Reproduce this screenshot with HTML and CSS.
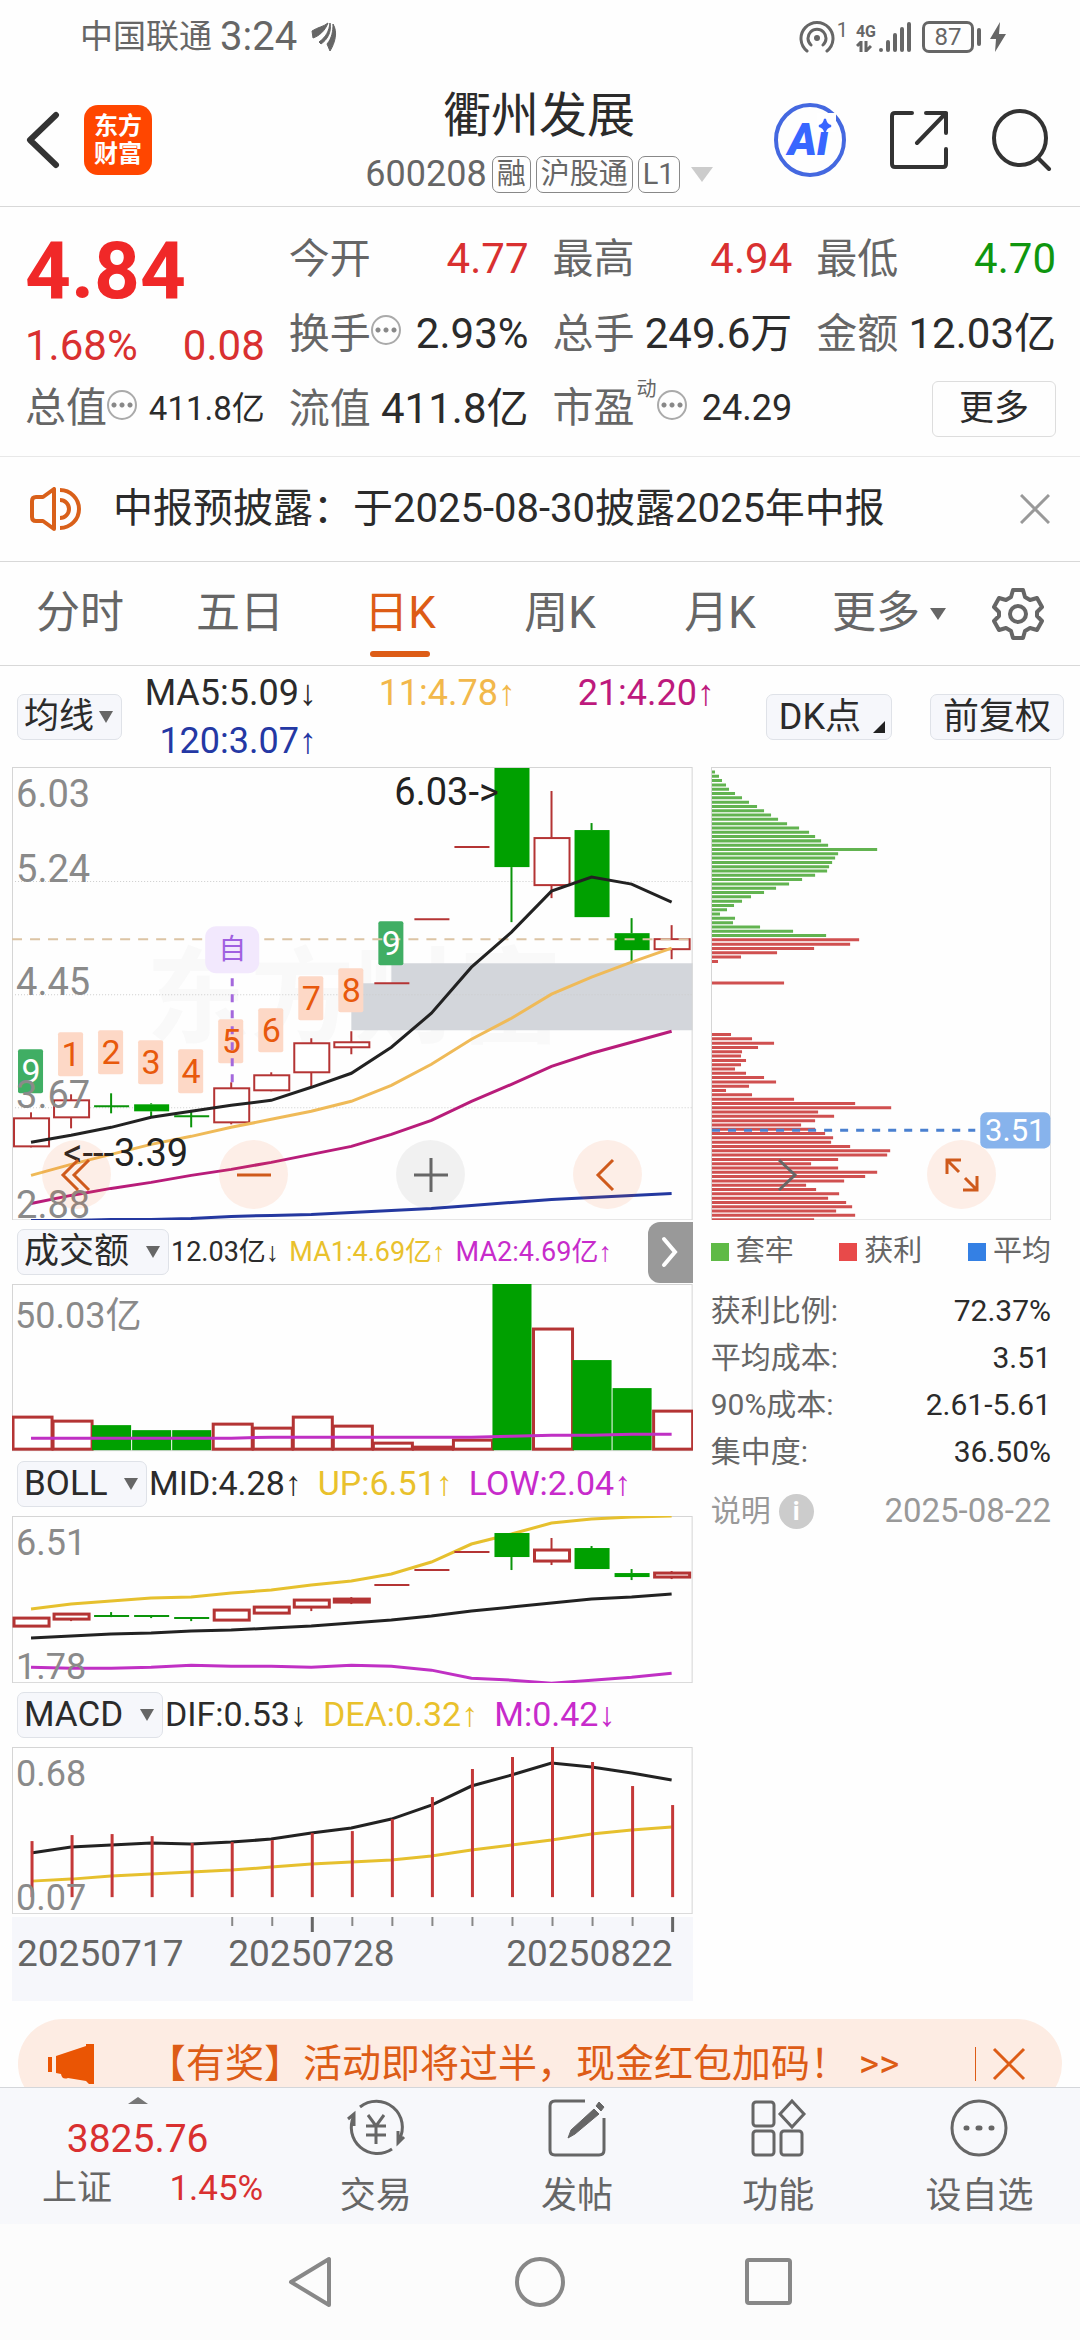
FILE: index.html
```html
<!DOCTYPE html>
<html lang="zh-CN">
<head>
  <meta charset="UTF-8">
  <meta name="viewport" content="width=device-width, initial-scale=1">
  <title>衢州发展 600208</title>
  <link rel="stylesheet" href="styles.css">
</head>
<body>
  <div class="status-bar">
    <span class="carrier">中国联通</span>
    <span class="clock">3:24</span>
    <svg class="status-leaf" width="26" height="30" viewBox="0 0 26 30">
      <path d="M1 9C7 5 12 5 17 1C14 9 8 14 2 16ZM8 20C15 15 18 9 19 1C21 10 16 18 10 22ZM22 2C27 10 24 21 19 29L16 22C21 16 22 9 22 2Z" fill="#666" stroke="#666"/>
    </svg>
    <div class="status-right">
      <svg width="36" height="34" viewBox="0 0 36 34" fill="none" stroke="#666" stroke-width="3" stroke-linecap="round">
        <path d="M8 31A16 16 0 1 1 28 31M12 25A9 9 0 1 1 24 25"/>
        <circle cx="18" cy="18" r="3" fill="#666" stroke="none"/>
      </svg>
      <span class="status-one">1</span>
      <span class="status-net">4G<svg width="16" height="11" viewBox="0 0 16 11" fill="none" stroke="#666" stroke-width="3"><path d="M1 5L5 1V11M10 0V10L15 5"/></svg></span>
      <svg width="34" height="32" viewBox="0 0 34 32" stroke="#666" stroke-width="4" stroke-linecap="round">
        <path d="M3 29V29M10 21V29M17 14V29M24 8V29M31 3V29"/>
      </svg>
      <span class="battery">87</span>
      <svg width="16" height="32" viewBox="0 0 16 32"><path d="M10 1L0 18H6L5 31L16 13H9Z" fill="#666"/></svg>
    </div>
  </div>

  <header class="title-bar">
    <div class="title-left">
      <button class="icon-btn" aria-label="返回">
        <svg width="34" height="58" viewBox="0 0 34 58" fill="none" stroke="#333" stroke-width="6" stroke-linecap="round" stroke-linejoin="round"><path d="M30 4L4 29L30 54"/></svg>
      </button>
      <span class="app-logo">东方<br>财富</span>
    </div>
    <div class="title-center">
      <h1>衢州发展</h1>
      <div class="stock-code">
        <span>600208</span>
        <span class="tag">融</span>
        <span class="tag">沪股通</span>
        <span class="tag">L1</span>
        <span class="caret"></span>
      </div>
    </div>
    <div class="title-right">
      <button class="icon-btn" aria-label="AI">
        <svg width="72" height="74" viewBox="0 0 72 74">
          <ellipse cx="36" cy="37" rx="34" ry="35" fill="none" stroke="#4468e0" stroke-width="4"/>
          <text x="14" y="52" class="ai-text">Ai</text>
          <path d="M43 10H62V29H43Z" fill="#fff"/>
          <path d="M51 16Q52 22 57 23Q52 24 51 29Q50 24 45 23Q50 22 51 16Z" fill="#3866ff" stroke="#3866ff" stroke-width="2"/>
        </svg>
      </button>
      <button class="icon-btn" aria-label="分享">
        <svg width="58" height="60" viewBox="0 0 58 60" fill="none" stroke="#333" stroke-width="4" stroke-linecap="round" stroke-linejoin="round"><path d="M22 3H5Q2 3 2 6V54Q2 57 5 57H53Q56 57 56 54V39M36 3H56V23M56 3L27 33"/></svg>
      </button>
      <button class="icon-btn" aria-label="搜索">
        <svg width="60" height="62" viewBox="0 0 60 62" fill="none" stroke="#333" stroke-width="4" stroke-linecap="round"><ellipse cx="28" cy="29" rx="26" ry="27"/><path d="M46 49L57 60"/></svg>
      </button>
    </div>
  </header>

  <main class="content">
    <section class="quote">
      <div class="quote-price">
        <div class="price">4.84</div>
        <div class="change"><span>1.68%</span><span>0.08</span></div>
      </div>
      <div class="cell"><span>今开</span><b class="up">4.77</b></div>
      <div class="cell"><span>最高</span><b class="up">4.94</b></div>
      <div class="cell"><span>最低</span><b class="down">4.70</b></div>
      <div class="cell"><span>换手</span><i class="dots"></i><b>2.93%</b></div>
      <div class="cell"><span>总手</span><b>249.6万</b></div>
      <div class="cell"><span>金额</span><b>12.03亿</b></div>
      <div class="cell"><span>总值</span><i class="dots"></i><b class="small">411.8亿</b></div>
      <div class="cell"><span>流值</span><b>411.8亿</b></div>
      <div class="cell"><span>市盈</span><sup>动</sup><i class="dots"></i><b class="medium">24.29</b></div>
      <div class="cell"><button class="more-btn">更多</button></div>
    </section>

    <section class="notice">
      <svg width="52" height="44" viewBox="0 0 52 44" fill="none" stroke="#d9601a" stroke-width="4" stroke-linejoin="round"><path d="M24 2V42L13 34H6Q2 34 2 30V14Q2 10 6 10H13ZM30 3A19 19 0 0 1 30 41M30 13A9 9 0 0 1 30 31"/></svg>
      <p>中报预披露：于2025-08-30披露2025年中报</p>
      <button class="icon-btn" aria-label="关闭">
        <svg width="30" height="30" viewBox="0 0 30 30" stroke="#999" stroke-width="3"><path d="M1 1L29 29M29 1L1 29"/></svg>
      </button>
    </section>

    <nav class="tabs">
      <button>分时</button>
      <button>五日</button>
      <button class="active">日K</button>
      <button>周K</button>
      <button>月K</button>
      <button class="tab-more">更多<span class="caret-sm"></span></button>
      <button class="tab-gear" aria-label="设置">
        <svg width="52" height="52" viewBox="0 0 52 52" fill="none" stroke="#666" stroke-width="4" stroke-linejoin="round"><path d="M21 2H31L33 9L38 12L45 10L50 19L45 24V28L50 33L45 42L38 40L33 43L31 50H21L19 43L14 40L7 42L2 33L7 28V24L2 19L7 10L14 12L19 9Z"/><circle cx="26" cy="26" r="8"/></svg>
      </button>
    </nav>

    <section class="ma-row">
      <div class="pick pick-tight"><select aria-label="主图指标"><option>均线</option></select></div>
      <div class="ma-values">
        <span>MA5:5.09↓</span>
        <span class="c-gold">11:4.78↑</span>
        <span class="c-plum">21:4.20↑</span>
        <span class="c-navy">120:3.07↑</span>
      </div>
      <button class="chip corner">DK点</button>
      <button class="chip">前复权</button>
    </section>

    <section class="charts">
      <div class="chart-left">
        <svg id="kline" viewBox="0 0 680 453"></svg>
        <div class="ind-head">
          <div class="pick"><select aria-label="副图一"><option>成交额</option></select></div>
          <div class="ind-values narrow"><span>12.03亿↓</span><span class="c-yellow">MA1:4.69亿↑</span><span class="c-pink">MA2:4.69亿↑</span></div>
          <button class="expand" aria-label="展开">
            <svg width="18" height="38" viewBox="0 0 18 38" fill="none" stroke="#fff" stroke-width="4" stroke-linecap="round"><path d="M3 6L14 19L3 32"/></svg>
          </button>
        </div>
        <svg id="volume" class="bold-bars" viewBox="0 0 680 167"></svg>
        <div class="ind-head">
          <div class="pick"><select aria-label="副图二"><option>BOLL</option></select></div>
          <div class="ind-values"><span>MID:4.28↑</span><span class="c-yellow">UP:6.51↑</span><span class="c-pink">LOW:2.04↑</span></div>
        </div>
        <svg id="boll" class="bold-bars" viewBox="0 0 680 167"></svg>
        <div class="ind-head">
          <div class="pick"><select aria-label="副图三"><option>MACD</option></select></div>
          <div class="ind-values"><span>DIF:0.53↓</span><span class="c-yellow">DEA:0.32↑</span><span class="c-pink">M:0.42↓</span></div>
        </div>
        <svg id="macd" viewBox="0 0 680 167"></svg>
        <svg id="axis" class="axis" viewBox="0 0 680 84"></svg>
      </div>

      <div class="chart-right">
        <svg id="chips" viewBox="0 0 340 453"></svg>
        <div class="legend"><span class="lg-green">套牢</span><span class="lg-red">获利</span><span class="lg-blue">平均</span></div>
        <table class="stats">
          <tr><th>获利比例:</th><td>72.37%</td></tr>
          <tr><th>平均成本:</th><td>3.51</td></tr>
          <tr><th>90%成本:</th><td>2.61-5.61</td></tr>
          <tr><th>集中度:</th><td>36.50%</td></tr>
        </table>
        <div class="stats-foot"><span>说明</span><span class="info">i</span><time>2025-08-22</time></div>
      </div>

      <div class="chart-tools">
        <button class="round" aria-label="最早"><svg viewBox="0 0 36 36"><path d="M19 3L4 18L19 33M30 3L15 18L30 33"/></svg></button>
        <button class="round" aria-label="缩小"><svg viewBox="0 0 36 36"><path d="M1 18H35"/></svg></button>
        <button class="round gray" aria-label="放大"><svg viewBox="0 0 36 36"><path d="M1 18H35M18 1V35"/></svg></button>
        <button class="round" aria-label="左移"><svg viewBox="0 0 36 36"><path d="M23 3L8 18L23 33"/></svg></button>
        <button class="round gray clear" aria-label="右移"><svg viewBox="0 0 36 36"><path d="M12 3L28 18L12 33"/></svg></button>
        <button class="round" aria-label="全屏"><svg viewBox="0 0 36 36"><path d="M3 17V3H17M3 3L15 15M33 19V33H19M33 33L21 21"/></svg></button>
      </div>
    </section>

    <aside class="banner">
      <svg width="48" height="40" viewBox="0 0 48 40" fill="#ea5504"><path d="M0 13H4V28H0ZM8 12L38 2V0H46V40H41L38 37L20 34Q14 36 13 30L8 29Z"/></svg>
      <p>【有奖】活动即将过半，现金红包加码！ &gt;&gt;</p>
      <button class="icon-btn banner-close" aria-label="关闭活动">
        <svg width="34" height="34" viewBox="0 0 34 34" stroke="#dd5c16" stroke-width="3"><path d="M2 2L32 32M32 2L2 32"/></svg>
      </button>
    </aside>
  </main>

  <footer class="bottom-bar">
    <div class="index-box">
      <span class="caret-up"></span>
      <div class="index-value">3825.76</div>
      <div class="index-row"><span>上证</span><span class="up">1.45%</span></div>
    </div>
    <button class="bottom-item">
      <svg viewBox="0 0 64 60"><path d="M16 9A26 26 0 0 1 55 42M48 51A26 26 0 0 1 10 18M4 21L10 16V28M60 39L54 45V33M24 17L32 28L40 17M22 28H42M22 37H42M32 28V46"/></svg>
      交易
    </button>
    <button class="bottom-item">
      <svg viewBox="0 0 64 60"><path d="M40 3H10Q5 3 5 8V52Q5 57 10 57H54Q59 57 59 52V20"/><path d="M54 4L59 9L56 13L51 8ZM49 11L54 16L30 36L23 40L26 32Z" fill="#666" stroke-width="1"/></svg>
      发帖
    </button>
    <button class="bottom-item">
      <svg viewBox="0 0 64 60"><rect x="7" y="4" width="21" height="24" rx="3"/><rect x="7" y="33" width="21" height="24" rx="3"/><rect x="35" y="33" width="21" height="24" rx="3"/><path d="M46 3L58 16L46 29L34 16Z"/></svg>
      功能
    </button>
    <button class="bottom-item">
      <svg viewBox="0 0 64 60"><circle cx="32" cy="30" r="27"/><path d="M19 30H20M31 30H33M44 30H45" stroke-width="5" stroke-linecap="round"/></svg>
      设自选
    </button>
  </footer>

  <div class="nav-bar">
    <button class="icon-btn" aria-label="返回键"><svg width="50" height="54" viewBox="0 0 50 54"><path d="M43 4V50L5 27Z"/></svg></button>
    <button class="icon-btn" aria-label="主页键"><svg width="50" height="54" viewBox="0 0 50 54"><circle cx="25" cy="27" r="23"/></svg></button>
    <button class="icon-btn" aria-label="任务键"><svg width="50" height="54" viewBox="0 0 50 54"><rect x="3" y="5" width="43" height="43" rx="2"/></svg></button>
  </div>

  <script>
    const STEP = 40;
    const cx = i => 19 + i * STEP;
    const line = (ys, cls) => `<polyline class="${cls}" points="${ys.map((y, i) => cx(i) + ',' + y).join(' ')}"/>`;
    const label = (x, y, t, cls = 'lbl') => `<text x="${x}" y="${y}" class="${cls}">${t}</text>`;
    const frame = (w, h) => `<rect class="frame" x="0.5" y="0.5" width="${w - 1}" height="${h - 1}"/>`;

    // [type, bodyTop, bodyBottom, wickTop, wickBottom]
    function candle(c, i) {
      const [type, top, bottom, high, low] = c;
      const x = cx(i);
      let out = '';
      if (high < top) out += `<path class="wick ${type}" d="M${x} ${high}V${top}"/>`;
      if (low > bottom) out += `<path class="wick ${type}" d="M${x} ${bottom}V${low}"/>`;
      if (bottom - top < 3) return out + `<path class="wick ${type}" d="M${x - 17} ${top}H${x + 18}"/>`;
      if (type === 'g') return out + `<rect class="body-g" x="${x - 17}" y="${top}" width="35" height="${bottom - top}"/>`;
      return out + `<rect class="body-r" x="${x - 17}" y="${top}" width="35" height="${bottom - top}"/>`;
    }

    const days = [
      ['r', 351, 379, 345, 380], ['r', 333, 350, 327, 361], ['g', 339, 339, 326, 346], ['g', 337, 344, 336, 349],
      ['g', 349, 349, 343, 360], ['r', 321, 355, 315, 357], ['r', 308, 323, 305, 324], ['r', 276, 305, 271, 319],
      ['r', 275, 280, 264, 287], ['r', 216, 216, 216, 216], ['r', 152, 152, 152, 152], ['r', 80, 80, 80, 80],
      ['g', 1, 100, 1, 155], ['r', 71, 118, 24, 131], ['g', 63, 150, 56, 150], ['g', 166, 183, 151, 196], ['r', 172, 182, 158, 192]
    ];
    const marks = [[9, 282], [1, 265], [2, 263], [3, 273], [4, 282], [5, 252], [6, 241], [7, 209], [8, 201], [9, 154]];

    document.getElementById('kline').innerHTML =
      label(134, 268, '东方财富', 'watermark') +
      '<path class="gap" d="M339 216H379V196H680V263H339Z"/>' +
      '<path class="grid" d="M0 114.5H680M0 227.5H680M0 340.5H680"/>' +
      frame(680, 453) +
      marks.map(([n, y], i) => `<rect class="${n === 9 ? 'mk-g' : 'mk-o'}" x="${cx(i) - 13}" y="${y}" width="25" height="44" rx="2"/>`).join('') +
      days.map(candle).join('') +
      '<path class="now" d="M0 172H680"/>' +
      '<rect class="self" x="193" y="159" width="54" height="47" rx="11"/>' +
      '<path class="self-line" d="M220 211V315"/>' +
      label(220, 192, '自', 'self-t') +
      marks.map(([n, y], i) => label(cx(i), y + 34, n, n === 9 ? 'mk-t white' : 'mk-t')).join('') +
      line([375, 368, 360, 350, 344, 338, 333, 320, 306, 280, 246, 200, 165, 124, 110, 117, 135], 'ln black') +
      line([408, 397, 387, 377, 369, 360, 352, 344, 334, 318, 297, 272, 251, 227, 210, 195, 181], 'ln gold') +
      line([436, 428, 421, 415, 408, 402, 395, 387, 379, 367, 353, 334, 317, 299, 286, 275, 264], 'ln plum') +
      line([453, 453, 452, 452, 451, 449, 448, 447, 445, 443, 441, 438, 435, 432, 430, 428, 426], 'ln navy') +
      [['6.03', 40], ['5.24', 115], ['4.45', 228], ['3.67', 341], ['2.88', 451]].map(([t, y]) => label(4, y, t)).join('') +
      label(382, 38, '6.03-&gt;', 'note') + '<text x="176" y="399" class="note end">&lt;---3.39</text>';

    const vols = [['r', 133], ['r', 137], ['g', 141], ['g', 146], ['g', 146], ['r', 140], ['r', 144], ['r', 133], ['r', 142],
      ['r', 159], ['r', 163], ['r', 156], ['g', 0], ['r', 45], ['g', 76], ['g', 104], ['r', 127]];
    document.getElementById('volume').innerHTML = frame(680, 167) +
      vols.map(([t, y], i) => t === 'g'
        ? `<rect class="body-g" x="${i * STEP}" y="${y}" width="39" height="${166 - y}"/>`
        : `<rect class="body-r" x="${i * STEP + 1}" y="${y}" width="39" height="${165 - y}"/>`).join('') +
      line([154, 154, 154, 154, 154, 154, 153, 153, 153, 153, 153, 153, 152, 151, 151, 150, 150], 'ln pink') +
      label(3, 44, '50.03亿', 'lbl sub');

    const bollDays = [
      ['r', 102, 110, 101, 110], ['r', 98, 103, 98, 105], ['g', 100, 100, 96, 101], ['g', 100, 100, 99, 102],
      ['g', 102, 102, 101, 105], ['r', 94, 104, 93, 104], ['r', 91, 97, 91, 97], ['r', 84, 91, 84, 95],
      ['r', 83, 86, 81, 88], ['r', 69, 69, 69, 69], ['r', 54, 54, 54, 54], ['r', 36, 36, 36, 36],
      ['g', 17, 41, 17, 54], ['r', 34, 45, 22, 49], ['g', 32, 53, 30, 53], ['g', 57, 61, 53, 64], ['r', 57, 61, 55, 63]
    ];
    document.getElementById('boll').innerHTML = frame(680, 167) +
      line([93, 88, 85, 82, 81, 77, 74, 69, 65, 58, 46, 28, 18, 7, 3, 1, 0], 'ln yellow') +
      bollDays.map(candle).join('') +
      line([122, 120, 118, 117, 115, 114, 112, 110, 107, 104, 100, 95, 91, 87, 83, 81, 78], 'ln black') +
      line([151, 152, 152, 151, 149, 150, 150, 151, 149, 150, 154, 162, 164, 167, 164, 161, 157], 'ln pink') +
      label(4, 39, '6.51', 'lbl sub') + label(4, 163, '1.78', 'lbl sub');

    const hist = [94, 88, 87, 89, 96, 95, 93, 86, 84, 72, 50, 22, 10, 0, 15, 39, 58];
    document.getElementById('macd').innerHTML = frame(680, 167) +
      line([106, 100, 98, 96, 97, 95, 92, 86, 81, 72, 58, 39, 28, 16, 20, 26, 33], 'ln black') +
      line([134, 132, 129, 127, 125, 123, 120, 117, 115, 113, 109, 103, 98, 93, 87, 83, 80], 'ln yellow') +
      hist.map((y, i) => `<path class="hist" d="M${cx(i) + 1} ${y}V150"/>`).join('') +
      label(4, 39, '0.68', 'lbl sub') + label(4, 163, '0.07', 'lbl sub');

    let ticks = '';
    for (let i = 5; i < 17; i++) {
      const major = i === 7 || i === 16;
      ticks += `<path class="${major ? 'tick major' : 'tick'}" d="M${cx(i) + 1} 0V${major ? 15 : 9}"/>`;
    }
    document.getElementById('axis').innerHTML = ticks +
      label(5, 49, '20250717', 'date') + label(216, 49, '20250728', 'date') + label(660, 49, '20250822', 'date end');

    // chip distribution, one length per price level
    const trapped = [3, 7, 10, 14, 17, 23, 30, 37, 45, 52, 59, 66, 75, 87, 97, 103, 109, 116, 165, 126, 123, 120, 117, 115,
      103, 90, 77, 64, 52, 39, 30, 22, 15, 8, 23, 21, 48, 81, 114];
    const profit = [147, 138, 102, 65, 29, 6, 0, 0, 0, 0, 72, 0, 0, 0, 0, 0, 0, 0, 0, 0, 0, 0,
      19, 40, 62, 46, 30, 29, 34, 29, 23, 34, 52, 64, 37, 14, 40, 82, 143, 179, 106, 122, 103, 89, 103,
      113, 121, 119, 138, 178, 175, 126, 99, 126, 165, 153, 132, 94, 104, 127, 116, 134, 140, 124, 143, 102];
    const rows = (list, from, cls) => `<path class="${cls}" d="${list.map((w, i) => w ? `M1 ${(5 + (from + i) * 4.3).toFixed(1)}h${w}` : '').join('')}"/>`;
    document.getElementById('chips').innerHTML = frame(340, 453) +
      rows(trapped, 0, 'chip-g') + rows(profit, trapped.length, 'chip-r') +
      '<path class="avg" d="M1 363H264"/><rect class="avg-box" x="269" y="345" width="70" height="36" rx="6"/>' +
      label(304, 374, '3.51', 'avg-t');
  </script>
</body>
</html>
```
FILE: styles.css
```css
:root {
  --up: #d93030;
  --down: #0f960f;
  --text: #2b2b2b;
  --muted: #666;
  --line: #d8d8d8;
  --orange: #dd5c16;
  --soft: #f6f7fb;
}

* {
  box-sizing: border-box;
}

body {
  margin: 0;
  height: 100vh;
  display: flex;
  flex-direction: column;
  overflow: hidden;
  background: #fefefe;
  color: var(--text);
  font-family: Roboto, "Liberation Sans", "Noto Sans CJK SC", sans-serif;
  line-height: 1.2;
}

button,
select {
  font-family: inherit;
  line-height: inherit;
  color: inherit;
  background: none;
  border: 0;
  padding: 0;
  margin: 0;
}

svg {
  display: block;
  flex-shrink: 0;
}

p,
h1 {
  margin: 0;
  font-weight: 400;
}

.up { color: var(--up); }
.down { color: var(--down); }
.c-gold { color: #f2b84b; }
.c-plum { color: #bd1a7d; }
.c-navy { color: #2438a4; }
.c-yellow { color: #e9c12c; }
.c-pink { color: #c72bcb; }

/* status bar */
.status-bar {
  display: flex;
  align-items: center;
  height: 74px;
  padding: 0 74px 0 80px;
  color: var(--muted);
}

.carrier {
  font-size: 33px;
}

.clock {
  margin: 0 14px 0 8px;
  font-size: 40px;
}

.status-right {
  display: flex;
  align-items: center;
  gap: 2px;
  margin-left: auto;
}

.status-one {
  align-self: flex-start;
  font-size: 20px;
  line-height: 20px;
}

.status-net {
  margin-left: 6px;
  font-size: 16px;
  font-weight: 700;
  line-height: 18px;
}

.battery {
  position: relative;
  width: 52px;
  margin: 0 14px 0 8px;
  border: 3px solid var(--muted);
  border-radius: 7px;
  font-size: 24px;
  line-height: 26px;
  text-align: center;
}

.battery::after {
  content: "";
  position: absolute;
  right: -10px;
  top: 4px;
  width: 4px;
  height: 18px;
  border-radius: 2px;
  background: var(--muted);
}

/* title bar */
.title-bar {
  display: grid;
  grid-template-columns: 1fr auto 1fr;
  align-items: center;
  height: 133px;
  padding: 0 28px 0 26px;
  border-bottom: 1px solid var(--line);
}

.title-left,
.title-right {
  display: flex;
  align-items: center;
}

.title-left {
  gap: 24px;
}

.title-right {
  justify-content: flex-end;
  gap: 44px;
}

.app-logo {
  width: 68px;
  padding: 7px 0;
  border-radius: 14px;
  background: #ff4600;
  color: #fff;
  font-size: 24px;
  font-weight: 700;
  line-height: 28px;
  text-align: center;
}

.title-center {
  padding-top: 4px;
}

.title-center h1 {
  font-size: 48px;
  line-height: 64px;
  text-align: center;
}

.ai-text {
  font-size: 44px;
  font-weight: 900;
  font-style: italic;
  fill: #3866ff;
}

.stock-code {
  display: flex;
  align-items: center;
  gap: 5px;
  color: var(--muted);
  font-size: 36px;
  line-height: 52px;
}

.tag {
  padding: 0 4px;
  border: 1px solid #888;
  border-radius: 7px;
  font-size: 29px;
  line-height: 35px;
}

.caret {
  margin-left: 6px;
  border: 11px solid transparent;
  border-top: 15px solid #ccc;
  border-bottom: 0;
}

/* quote */
.content {
  flex: 1;
  min-height: 0;
  overflow: hidden;
}

.quote {
  display: grid;
  grid-template-columns: repeat(4, 1fr);
  grid-auto-rows: 75px;
  column-gap: 24px;
  padding: 14px 24px 10px 25px;
  border-bottom: 1px solid #e8e8e8;
}

.quote-price {
  grid-row: span 2;
}

.price {
  color: #f02828;
  font-size: 80px;
  font-weight: 700;
  line-height: 100px;
}

.change {
  display: flex;
  justify-content: space-between;
  color: var(--up);
  font-size: 42px;
  line-height: 50px;
}

.cell {
  display: flex;
  align-items: baseline;
  font-size: 41px;
  line-height: 75px;
  white-space: nowrap;
}

.cell span {
  color: var(--muted);
}

.cell b {
  margin-left: auto;
  font-size: 42px;
  font-weight: 400;
}

.cell b.small {
  align-self: center;
  font-size: 33px;
}

.cell b.medium {
  align-self: center;
  font-size: 36px;
}

.cell sup {
  align-self: flex-start;
  margin-left: 2px;
  color: var(--muted);
  font-size: 20px;
  line-height: 36px;
}

.dots {
  align-self: center;
  width: 30px;
  height: 30px;
  margin-bottom: 8px;
  border: 2px solid #aaa;
  border-radius: 50%;
  background: radial-gradient(circle, #888 2px, transparent 3px) 1px 0 / 8px 26px repeat-x;
}

.more-btn {
  align-self: center;
  width: 124px;
  height: 56px;
  margin-left: auto;
  border: 1px solid #ddd;
  border-radius: 6px;
  font-size: 35px;
  line-height: 54px;
}

/* notice */
.notice {
  display: flex;
  align-items: center;
  height: 105px;
  padding: 0 30px;
  border-bottom: 1px solid var(--line);
}

.notice p {
  flex: 1;
  margin-left: 31px;
  font-size: 40px;
}

/* tabs */
.tabs {
  display: flex;
  height: 104px;
  padding-right: 22px;
  border-bottom: 1px solid var(--line);
}

.tabs button {
  position: relative;
  flex: 160;
  color: var(--muted);
  font-size: 44px;
}

.tabs .active {
  color: var(--orange);
}

.tabs .active::after {
  content: "";
  position: absolute;
  left: calc(50% - 30px);
  bottom: 8px;
  width: 60px;
  height: 6px;
  border-radius: 3px;
  background: var(--orange);
}

.tabs .tab-more {
  flex: 178;
  display: flex;
  align-items: center;
  justify-content: center;
  gap: 10px;
}

.tabs .tab-gear {
  flex: 80;
  display: flex;
  align-items: center;
  justify-content: center;
}

.caret-sm {
  border: 8px solid transparent;
  border-top: 12px solid var(--muted);
  border-bottom: 0;
}

/* indicator pickers */
.pick {
  position: relative;
}

.pick select {
  appearance: none;
  height: 46px;
  padding: 0 38px 0 6px;
  border: 1px solid #dfe2e8;
  border-radius: 7px;
  background: var(--soft);
  font-size: 35px;
  line-height: 44px;
}

.pick::after {
  content: "";
  position: absolute;
  right: 9px;
  top: 17px;
  border: 7px solid transparent;
  border-top: 12px solid var(--muted);
  border-bottom: 0;
  pointer-events: none;
}

.pick-tight select {
  padding-right: 26px;
}

.ma-row {
  display: flex;
  align-items: center;
  height: 101px;
  padding: 0 16px 0 17px;
}

.ma-values {
  display: grid;
  grid-template-columns: repeat(3, 199px);
  margin-left: -4px;
  margin-right: auto;
  font-size: 36px;
  line-height: 48px;
  text-align: right;
}

.chip {
  position: relative;
  height: 46px;
  margin-left: 38px;
  padding: 0 12px;
  border: 1px solid #dfe2e8;
  border-radius: 7px;
  background: var(--soft);
  font-size: 36px;
  line-height: 44px;
}

.corner {
  padding-right: 30px;
}

.corner::after {
  content: "";
  position: absolute;
  right: 6px;
  bottom: 6px;
  border-left: 12px solid transparent;
  border-bottom: 12px solid #222;
}

/* charts */
.charts {
  position: relative;
  display: grid;
  grid-template-columns: 2fr 1fr;
  column-gap: 18px;
  padding: 0 29px 0 12px;
}

.charts svg {
  width: 100%;
}

.ind-head {
  display: flex;
  align-items: center;
  height: 64px;
  padding-left: 5px;
}

.ind-values {
  display: flex;
  gap: 16px;
  margin-left: 2px;
  font-size: 34px;
  white-space: nowrap;
}

.ind-values.narrow {
  gap: 10px;
  font-size: 27px;
}

.expand {
  display: flex;
  align-items: center;
  justify-content: center;
  width: 45px;
  height: 61px;
  margin-left: auto;
  border-radius: 12px 0 0 12px;
  background: #999;
}

.charts .expand svg {
  width: 18px;
}

.axis {
  margin-top: 3px;
  background: var(--soft);
}

.frame { fill: none; stroke: #d5d5d5; }
.grid { stroke: #ccc; stroke-dasharray: 1 2; }
.gap { fill: #d3d6db; }
.now { stroke: #dcc4a4; stroke-width: 2; stroke-dasharray: 10 8; }
.wick { fill: none; stroke-width: 2; }
.wick.r { stroke: #b43434; }
.wick.g { stroke: #0a940a; }
.body-g { fill: #00a000; }
.body-r { fill: #fff; stroke: #b43434; stroke-width: 2; }
.bold-bars .body-r { stroke-width: 3; }
.mk-g { fill: #40ae64; }
.mk-o { fill: #fdd8c6; }
.mk-t { fill: #e8590c; font-size: 34px; text-anchor: middle; }
.mk-t.white { fill: #fff; }
.self { fill: #f2e8fd; }
.self-line { stroke: #a468dc; stroke-width: 3; stroke-dasharray: 8 8; }
.self-t { fill: #a060e0; font-size: 28px; text-anchor: middle; }
.lbl { fill: #8a8a8a; font-size: 38px; }
.lbl.sub { font-size: 36px; }
.note { fill: #222; font-size: 38px; }
.end { text-anchor: end; }
.watermark { fill: #f9f9f9; font-size: 104px; font-weight: 700; }
.ln { fill: none; stroke-width: 3; }
.black { stroke: #222; }
.gold { stroke: #efba58; }
.plum { stroke: #b81c7a; }
.navy { stroke: #2438a0; }
.yellow { stroke: #e6c02e; }
.pink { stroke: #c030c4; }
.hist { stroke: #c43838; stroke-width: 3; }
.tick { stroke: #888; stroke-width: 2; }
.tick.major { stroke: #666; stroke-width: 3; }
.date { fill: #666; font-size: 37px; }
.chip-g { stroke: #62b350; stroke-width: 3; }
.chip-r { stroke: #d05050; stroke-width: 3; }
.avg { stroke: #4a80d0; stroke-width: 3; stroke-dasharray: 8 8; }
.avg-box { fill: #87b3ec; }
.avg-t { fill: #fff; font-size: 31px; text-anchor: middle; }

/* chip panel */
.legend {
  display: flex;
  justify-content: space-between;
  color: var(--muted);
  font-size: 29px;
  line-height: 62px;
}

.legend span::before {
  content: "";
  display: inline-block;
  width: 18px;
  height: 18px;
  margin-right: 7px;
  background: #5fba46;
}

.legend .lg-red::before { background: #e84a4a; }
.legend .lg-blue::before { background: #3480e4; }

.stats {
  width: 100%;
  margin-top: 5px;
  border-collapse: collapse;
  font-size: 30px;
  line-height: 47px;
}

.stats th,
.stats td {
  padding: 0;
  font-weight: 400;
  text-align: left;
}

.stats th {
  color: var(--muted);
}

.stats td {
  text-align: right;
}

.stats-foot {
  display: flex;
  align-items: center;
  margin-top: 13px;
  color: #999;
  font-size: 30px;
  line-height: 46px;
}

.stats-foot time {
  margin-left: auto;
  font-size: 33px;
}

.info {
  width: 35px;
  margin-left: 8px;
  border-radius: 50%;
  background: #ccc;
  color: #fff;
  font-size: 26px;
  font-weight: 700;
  line-height: 35px;
  text-align: center;
}

.chart-tools {
  position: absolute;
  top: 373px;
  left: 42px;
  right: 84px;
  display: flex;
  justify-content: space-between;
}

.round {
  display: flex;
  align-items: center;
  justify-content: center;
  width: 69px;
  height: 69px;
  border-radius: 50%;
  background: rgba(250, 100, 30, 0.1);
}

.charts .round svg {
  width: 36px;
  fill: none;
  stroke: #cf5a1c;
  stroke-width: 3;
}

.round.gray {
  background: rgba(0, 0, 0, 0.05);
}

.charts .round.gray svg {
  stroke: #666;
}

.round.clear {
  background: none;
}

/* banner */
.banner {
  display: flex;
  align-items: center;
  height: 90px;
  margin: 18px 18px 0;
  padding: 0 36px 0 30px;
  border-radius: 45px;
  background: #fdece3;
  color: var(--orange);
}

.banner p {
  flex: 1;
  margin-left: 51px;
  font-size: 39px;
  white-space: nowrap;
}

.banner-close {
  padding-left: 16px;
  border-left: 1px solid var(--orange);
}

/* bottom bar */
.bottom-bar {
  display: grid;
  grid-template-columns: 275fr repeat(4, 201fr);
  height: 137px;
  border-top: 1px solid #d4d6da;
  background: #f7f8fb;
  color: var(--muted);
  font-size: 35px;
}

.index-box {
  display: flex;
  flex-direction: column;
  align-items: center;
  padding: 9px 12px 0 42px;
}

.caret-up {
  border: 10px solid transparent;
  border-top: 0;
  border-bottom: 7px solid #777;
  margin-right: 30px;
}

.index-value {
  margin-right: 30px;
  color: var(--up);
  font-size: 39px;
  line-height: 70px;
}

.index-row {
  display: flex;
  justify-content: space-between;
  width: 100%;
  line-height: 30px;
}

.bottom-item {
  display: flex;
  flex-direction: column;
  align-items: center;
  padding-top: 10px;
  font-size: 36px;
  line-height: 76px;
}

.bottom-item svg {
  width: 64px;
  height: 60px;
  fill: none;
  stroke: #666;
  stroke-width: 3;
}

/* system navigation */
.nav-bar {
  display: flex;
  align-items: center;
  justify-content: center;
  gap: 179px;
  height: 116px;
  background: #fcfcfc;
}

.nav-bar svg {
  fill: none;
  stroke: #888;
  stroke-width: 4;
  stroke-linejoin: round;
}
```
